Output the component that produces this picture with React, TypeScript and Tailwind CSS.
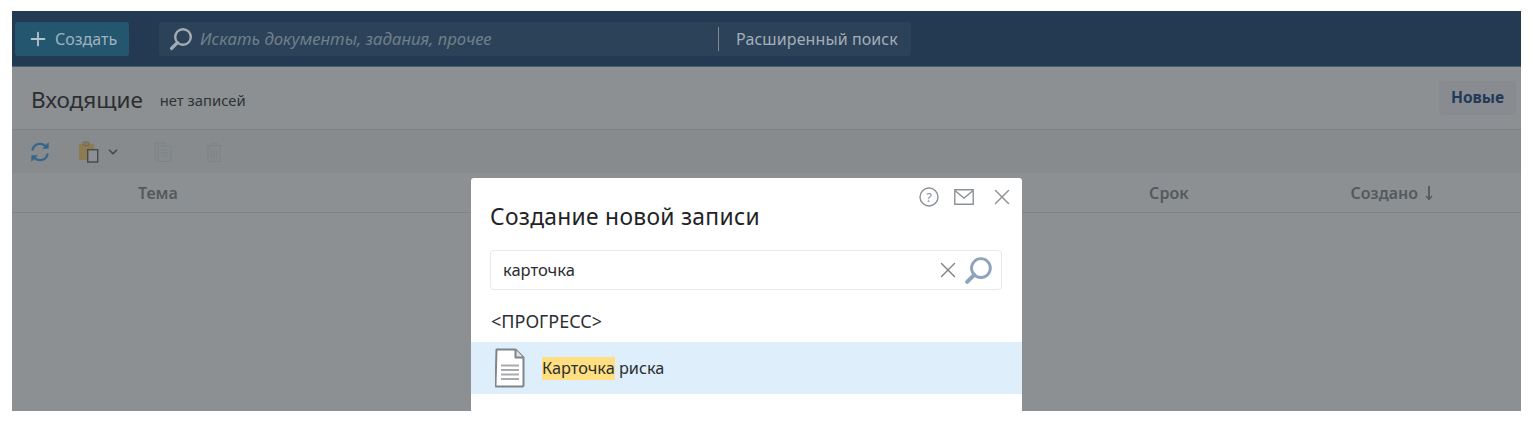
import { ChevronDown, Plus, X } from 'lucide-react';

const FONT = "font-['Noto_Sans','Open_Sans',sans-serif]";

function SearchGlass({ className, color }: { className: string; color: string }) {
  return (
    <svg viewBox="0 0 24 24" fill="none" className={className}>
      <circle cx="14" cy="10" r="7.8" stroke={color} strokeWidth="2.4" />
      <path d="M8.4 15.6 2.6 21.4" stroke={color} strokeWidth="3.4" strokeLinecap="round" />
    </svg>
  );
}

function RefreshIcon() {
  return (
    <svg viewBox="0 0 22 22" fill="none" className="w-[22px] h-[22px]">
      <path d="M3.2 9.5C4.1 5.4 7.2 2.8 11 2.8c2.4 0 4.4 1 5.9 2.8" stroke="#38648c" strokeWidth="2.2" />
      <path d="M19.6 1.2v6.6H13z" fill="#38648c" />
      <path d="M18.8 12.5c-.9 4.1-4 6.7-7.8 6.7-2.4 0-4.4-1-5.9-2.8" stroke="#38648c" strokeWidth="2.2" />
      <path d="M2.4 20.8v-6.6H9z" fill="#38648c" />
    </svg>
  );
}

function PasteIcon() {
  return (
    <svg viewBox="0 0 22 22" fill="none" className="w-[22px] h-[22px]">
      <path d="M1 3h15v5H9v11H1z" fill="#8f7b52" />
      <rect x="5" y="1" width="6" height="3.5" rx="1" fill="#8f7b52" stroke="#6f6a5c" strokeWidth="1" />
      <rect x="9.7" y="8.7" width="10" height="12.3" fill="#8c9093" stroke="#44494d" strokeWidth="1.4" />
    </svg>
  );
}

function CopyIcon() {
  return (
    <svg viewBox="0 0 18 20" fill="none" stroke="#7f8386" strokeWidth="1.1" className="w-[18px] h-5">
      <path d="M3.5 16H1V1h10v2.5" />
      <path d="M4 4h13v15.5H4z" />
      <path d="M7 8h7M7 11h7M7 14h7" />
    </svg>
  );
}

function TrashIcon() {
  return (
    <svg viewBox="0 0 18 20" fill="none" stroke="#7f8386" strokeWidth="1.1" className="w-[18px] h-5">
      <path d="M1 3.5h16M6.5 3.5V1h5v2.5" />
      <path d="M3 4h12v15.5H3z" />
      <path d="M6.5 7.5v9M9 7.5v9M11.5 7.5v9" />
    </svg>
  );
}

function SortArrow() {
  return (
    <svg viewBox="0 0 10 16" fill="none" stroke="currentColor" className="w-[10px] h-4">
      <path d="M5 1v13" strokeWidth="1.8" />
      <path d="M2 11l3 3.5L8 11" strokeWidth="1.2" />
    </svg>
  );
}

function DocumentIcon() {
  return (
    <svg viewBox="0 0 30 40" fill="none" className="w-[30px] h-10">
      <path d="M1.5 1.5h19l8 8v28a1 1 0 0 1-1 1h-26a1 1 0 0 1-1-1z" fill="#ffffff" stroke="#7f8488" strokeWidth="2" strokeLinejoin="round" />
      <path d="M20.5 1.5v8h8" fill="#dfe1e3" stroke="#7f8488" strokeWidth="2" strokeLinejoin="round" />
      <path d="M6 17.5h18M6 22h18M6 26.5h18M6 31h18" stroke="#a9acae" strokeWidth="2" />
    </svg>
  );
}

export default function App() {
  return (
    <div className={`${FONT} w-[1534px] h-[434px] bg-white pt-[11px] pl-3`}>
      <div className="relative w-[1509px] h-[400px] overflow-hidden bg-[#8c9093]">
        {/* Top bar */}
        <div className="h-14 bg-[#233a52] border-b border-[#4a5f72] flex items-center pl-[3px]">
          <button className="w-[114px] h-[34px] rounded-[3px] bg-[#25566f] flex items-center pl-[12px] gap-[6px] text-[16px] text-[#9fb2bd]">
            <Plus className="w-[22px] h-[22px] text-[#b5c2ca]" strokeWidth={2} />
            Создать
          </button>
          <div className="ml-[30px] w-[752px] h-[34px] rounded-[3px] bg-[#2c4258] flex items-center pl-[10px]">
            <SearchGlass className="w-6 h-6" color="#a3acb4" />
            <span className="ml-[7px] w-[518px] text-[16.8px] italic text-[#6f7f8c]">Искать документы, задания, прочее</span>
            <div className="w-px h-6 bg-[#7d8b97]" />
            <span className="ml-[17px] text-[16px] tracking-[0.1px] text-[#a3aeb8]">Расширенный поиск</span>
          </div>
        </div>

        {/* Title row */}
        <div className="h-[63px] border-b border-[#7f8386] flex items-center pl-[19px] pr-[5px]">
          <h1 className="mt-[3px] text-[22.5px] text-[#2b2e31]">Входящие</h1>
          <span className="ml-[17px] mt-[5px] text-[14.8px] text-[#2f3336]">нет записей</span>
          <button className="ml-auto w-[77px] h-[34px] rounded-[3px] bg-[#888c90] text-[15.5px] font-bold text-[#22395a]">Новые</button>
        </div>

        {/* Toolbar */}
        <div className="h-[43px] bg-[#878b8e] flex items-center pl-[17px]">
          <RefreshIcon />
          <div className="ml-[27px]"><PasteIcon /></div>
          <ChevronDown className="ml-[6px] w-[14px] h-[14px] text-[#44494d]" strokeWidth={3} />
          <div className="ml-[34px]"><CopyIcon /></div>
          <div className="ml-[33px]"><TrashIcon /></div>
        </div>

        {/* Table header */}
        <div className="h-10 border-b border-[#7f8386] flex items-center text-[16px] font-semibold text-[#55595c]">
          <span className="ml-[126px]">Тема</span>
          <span className="ml-auto">Срок</span>
          <span className="ml-[162px] mr-[87px] flex items-center gap-[6px]">
            Создано
            <SortArrow />
          </span>
        </div>

        {/* Create dialog */}
        <div className="absolute left-[459px] top-[167px] w-[551px] h-[260px] bg-white rounded-t-[3px]">
          <div className="absolute right-[7px] top-[6px] flex items-center gap-[15px] text-[#8d9195]">
            <svg viewBox="0 0 20 20" fill="none" className="w-5 h-5">
              <circle cx="10" cy="10" r="9" stroke="currentColor" strokeWidth="1.4" />
              <text x="10" y="14.5" textAnchor="middle" fontSize="13" fill="currentColor">?</text>
            </svg>
            <svg viewBox="0 0 20 16" fill="none" stroke="currentColor" strokeWidth="1.4" className="w-5 h-4">
              <path d="M.8.8h18.4v14.4H.8z" />
              <path d="M.8 1.5 10 9l9.2-7.5" />
            </svg>
            <X className="w-[26px] h-[26px]" strokeWidth={1.3} />
          </div>

          <h2 className="pl-[19px] pt-6 text-[22.8px] leading-[30px] tracking-[0.3px] text-[#1f2327]">Создание новой записи</h2>

          <div className="ml-[19px] mt-[18px] w-[512px] h-10 rounded-[4px] border border-[#e6e8ea] flex items-center pl-3 pr-2 text-[16.5px] text-[#2b2e31]">
            карточка
            <X className="ml-auto w-[26px] h-[26px] text-[#7d8286]" strokeWidth={1.3} />
            <SearchGlass className="ml-[3px] w-[29px] h-[29px]" color="#8fa3bd" />
          </div>

          <div className="pl-5 mt-[18px] h-[26px] text-[18px] leading-[26px] text-[#2b2e31]">&lt;ПРОГРЕСС&gt;</div>

          <div className="mt-2 h-[52px] bg-[#deeefb] flex items-center pl-6 text-[16.3px] text-[#2b2e31]">
            <DocumentIcon />
            <span className="ml-[17px]">
              <span className="inline-block h-[23px] leading-[23px] bg-[#ffdf80]">Карточка</span> риска
            </span>
          </div>
        </div>
      </div>
    </div>
  );
}
